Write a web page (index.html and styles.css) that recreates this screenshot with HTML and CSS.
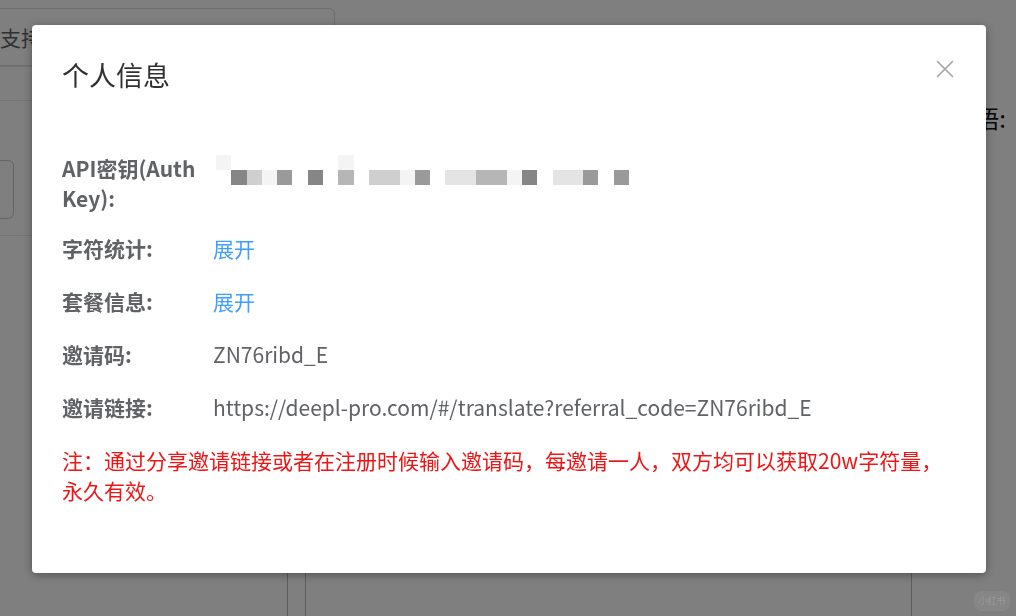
FILE: index.html
```html
<!DOCTYPE html>
<html lang="zh">
<head>
<meta charset="utf-8">
<title>个人信息</title>
<link rel="stylesheet" href="styles.css">
</head>
<body>
<div class="page">
  <div class="topbox"><span class="topbox-text">支持pdf、docx、pptx</span></div>
  <div class="mid">
    <div class="leftcol">
      <div class="rule rule-a"></div>
      <div class="rule rule-b"></div>
      <div class="stub"></div>
      <div class="rule rule-c"></div>
    </div>
    <div class="rightlabel">目标语:</div>
  </div>
  <div class="cols">
    <div class="col col1"></div>
    <div class="col col2"></div>
    <div class="col col3"></div>
    <div class="col col4"></div>
  </div>
</div>

<div class="overlay">
  <div class="dialog">
    <div class="dialog-header">
      <span class="dialog-title">个人信息</span>
      <button class="close" aria-label="关闭">
        <svg width="18" height="18" viewBox="0 0 18 18"><path d="M1.5 1.5 L16.5 16.5 M16.5 1.5 L1.5 16.5" stroke="#a0a3a8" stroke-width="1.6" fill="none" stroke-linecap="round"/></svg>
      </button>
    </div>
    <div class="dialog-body">
      <div class="row row-key">
        <div class="label">API密钥(Auth Key):</div>
        <div class="value key">
          <div class="pxrow">
            <span class="px s1"></span><span class="px"></span><span class="px"></span><span class="px"></span><span class="px"></span><span class="px"></span><span class="px"></span><span class="px"></span><span class="px s1"></span>
          </div>
          <div class="pxrow">
            <span class="px"></span><span class="px d"></span><span class="px l"></span><span class="px s1"></span><span class="px m"></span><span class="px"></span><span class="px d"></span><span class="px"></span><span class="px ml"></span><span class="px"></span><span class="px l"></span><span class="px l"></span><span class="px s1"></span><span class="px m"></span><span class="px"></span><span class="px s2"></span><span class="px s2"></span><span class="px ml"></span><span class="px ml"></span><span class="px s1"></span><span class="px d"></span><span class="px"></span><span class="px s2"></span><span class="px s2"></span><span class="px m"></span><span class="px"></span><span class="px m"></span>
          </div>
        </div>
      </div>
      <div class="row">
        <div class="label">字符统计:</div>
        <div class="value"><a class="link" href="#">展开</a></div>
      </div>
      <div class="row">
        <div class="label">套餐信息:</div>
        <div class="value"><a class="link" href="#">展开</a></div>
      </div>
      <div class="row">
        <div class="label">邀请码:</div>
        <div class="value">ZN76ribd_E</div>
      </div>
      <div class="row">
        <div class="label">邀请链接:</div>
        <div class="value">https://deepl-pro.com/#/translate?referral_code=ZN76ribd_E</div>
      </div>
      <p class="note">注：通过分享邀请链接或者在注册时候输入邀请码，每邀请一人，双方均可以获取20w字符量，永久有效。</p>
    </div>
  </div>
  <div class="watermark">小红书</div>
</div>
</body>
</html>
```

FILE: styles.css
```css
* { box-sizing: border-box; }
html, body { margin: 0; padding: 0; }
body {
  width: 1016px;
  height: 616px;
  overflow: hidden;
  background: #ffffff;
  font-family: "Noto Sans CJK SC", "Noto Sans", sans-serif;
  color: #303133;
}

/* underlying page */
.page {
  display: flex;
  flex-direction: column;
  height: 616px;
  padding-top: 8px;
}
.topbox {
  width: 335px;
  height: 58px;
  border: 1px solid #dcdfe6;
  border-left: none;
  border-radius: 0 6px 6px 0;
  display: flex;
  align-items: center;
  white-space: nowrap;
  font-size: 21px;
  color: #606266;
}
.mid {
  display: flex;
  height: 180px;
}
.leftcol {
  width: 288px;
  display: flex;
  flex-direction: column;
}
.rule { border-top: 1px solid #e4e7ed; }
.rule-b { margin-top: 33px; }
.stub {
  margin-top: 59px;
  width: 14px;
  height: 59px;
  border: 1px solid #c8cbd0;
  border-left: none;
  border-radius: 0 6px 6px 0;
}
.rule-c { margin-top: 16px; }
.rightlabel {
  margin-left: auto;
  padding-right: 10px;
  padding-top: 37px;
  font-size: 24px;
  line-height: 30px;
  color: #111;
  white-space: nowrap;
}
.cols {
  flex: 1;
  display: grid;
  grid-template-columns: 288px 17px 607px 1fr;
}
.col1 { border-right: 1px solid #bbbbbb; }
.col3 { border-left: 1px solid #bbbbbb; border-right: 1px solid #bbbbbb; }

/* overlay + dialog */
.overlay {
  position: fixed;
  inset: 0;
  background: rgba(0, 0, 0, 0.5);
  padding: 25px 30px 0 32px;
}
.dialog {
  width: 954px;
  height: 548px;
  background: #ffffff;
  border-radius: 4px;
  box-shadow: 0 2px 10px rgba(0, 0, 0, 0.35);
  padding: 0 30px;
}
.dialog-header {
  display: flex;
  align-items: flex-start;
  justify-content: space-between;
  padding-top: 32px;
}
.dialog-title {
  font-size: 27px;
  line-height: 36px;
  color: #303133;
}
.close {
  border: none;
  background: none;
  padding: 0;
  margin-right: 2px;
  margin-top: 3px;
  width: 18px;
  height: 18px;
  display: flex;
}
.dialog-body {
  padding-top: 60px;
}
.row {
  display: flex;
  margin-bottom: 23px;
  font-size: 21px;
  line-height: 30px;
}
.row-key { margin-bottom: 20px; }
.label {
  width: 151px;
  flex: none;
  font-weight: 700;
  color: #606266;
}
.value {
  color: #606266;
}
.link {
  color: #409eff;
  text-decoration: none;
}
.key {
  padding-top: 2px;
  padding-left: 3px;
  display: flex;
  flex-direction: column;
}
.pxrow { display: flex; height: 15px; }
.px { width: 15.3px; height: 15px; background: #ffffff; }
.px.s1 { background: #f4f4f4; }
.px.s2 { background: #e4e4e4; }
.px.l { background: #cfcfcf; }
.px.ml { background: #b6b6b6; }
.px.m { background: #9a9a9a; }
.px.d { background: #868686; }
.note {
  margin: 0;
  font-size: 21px;
  line-height: 30px;
  color: #f01414;
}
.watermark {
  position: absolute;
  left: 974px;
  top: 591px;
  width: 36px;
  height: 20px;
  border-radius: 7px;
  background: rgba(255, 255, 255, 0.05);
  color: rgba(255, 255, 255, 0.15);
  font-size: 9px;
  line-height: 20px;
  text-align: center;
}
```
